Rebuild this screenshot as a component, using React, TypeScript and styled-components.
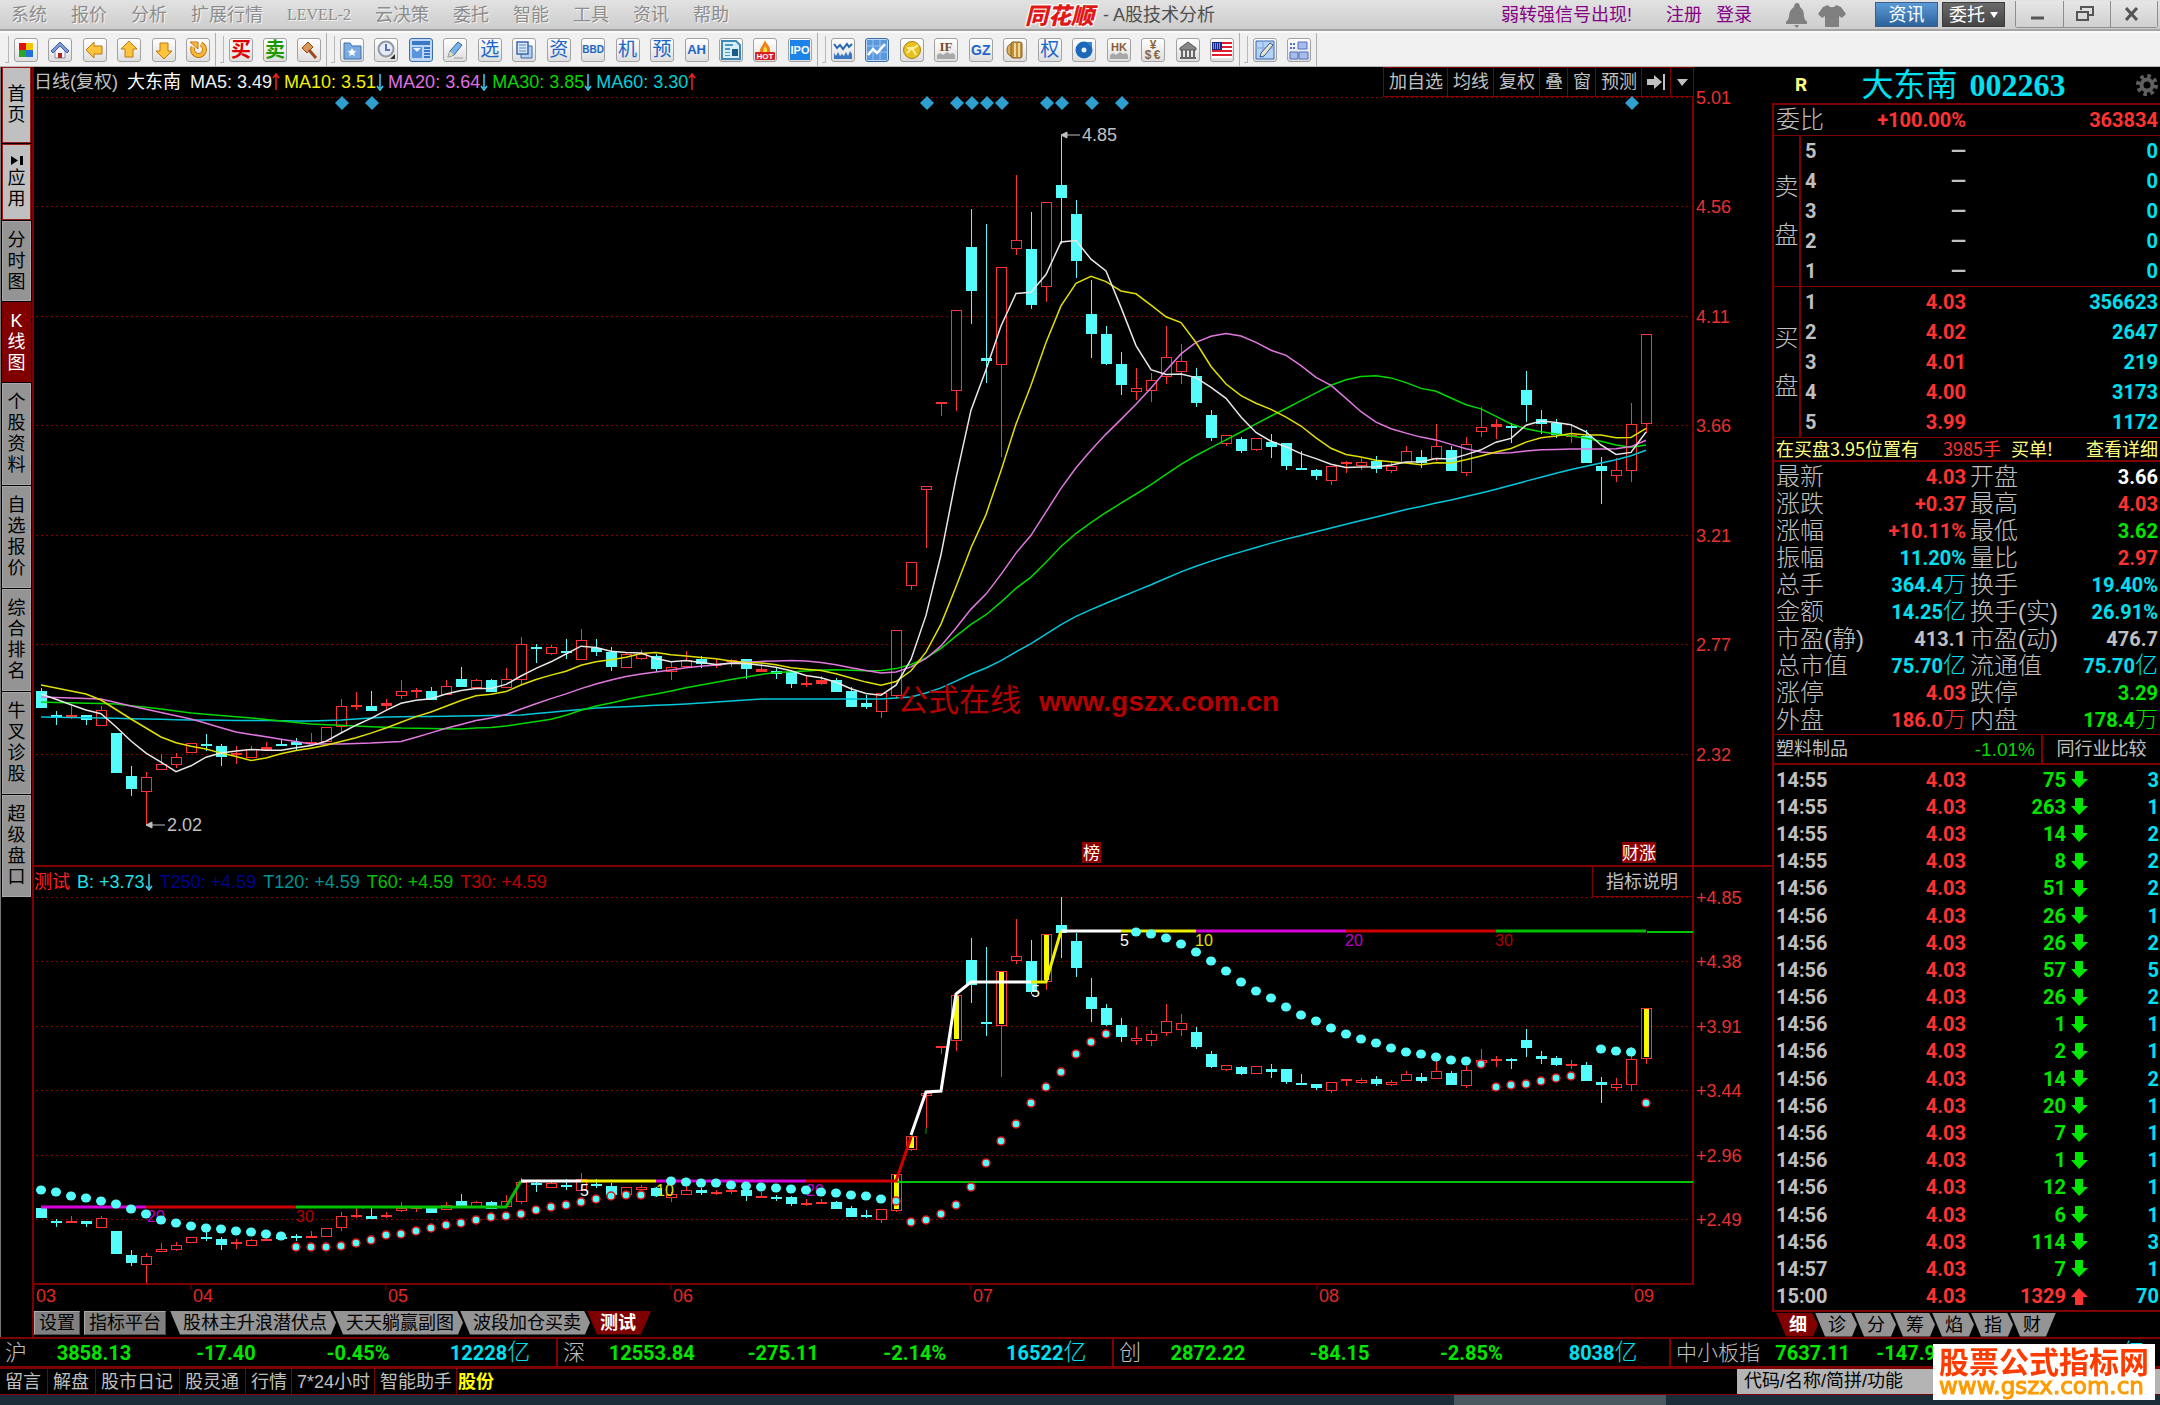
import React from 'react';
import styled, { createGlobalStyle, css } from 'styled-components';

const RED = '#ff3232';
const GREEN = '#00e600';
const CYAN = '#00e0f0';
const LINE = '#800000';
const GREY = '#c0c0c0';
const sans = '"Liberation Sans", "Noto Sans CJK SC", sans-serif';
const numeric = 'Roboto, "Noto Sans CJK SC", sans-serif';

const GlobalStyle = createGlobalStyle`
  *, *::before, *::after { box-sizing: border-box; }
  body { margin: 0; background: #000; color: ${GREY}; font: 18px/1 ${sans}; }
  button, input { font: inherit; color: inherit; margin: 0; padding: 0; border: 0; background: none; }
  button { cursor: pointer; }
  a { color: inherit; text-decoration: none; }
  table { border-collapse: collapse; border-spacing: 0; width: 100%; }
  th, td { padding: 0; font-weight: inherit; text-align: left; }
  h1, dl, dd { margin: 0; font-weight: inherit; }
`;

const Page = styled.div`
  display: flex;
  flex-direction: column;
  min-height: 100vh;
  overflow: hidden;
  white-space: nowrap;
`;

/* ---------- title bar ---------- */

const TitleBar = styled.header`
  display: grid;
  grid-template-columns: 1fr auto 1fr;
  align-items: center;
  height: 31px;
  background: linear-gradient(#e2e2e2, #cdcdcd);
  border-bottom: 2px solid #a4a4a4;
`;
const Menu = styled.nav`
  display: flex;
  gap: 24px;
  padding-left: 11px;
  color: #8c8c8c;
  text-shadow: 1px 1px 0 #f4f4f4;
`;
const SerifLink = styled.a`
  font: 16px/18px "Liberation Serif", serif;
`;
const Caption = styled.h1`
  display: flex;
  align-items: center;
  gap: 9px;
  padding-left: 80px;
  font-size: 18px;
  color: #505050;
`;
const Logo = styled.span`
  font: italic 900 23px/29px "Noto Sans CJK SC", sans-serif;
  color: #e01818;
  text-shadow: 1px 1px 0 #fff, -1px -1px 0 #fff, 1px -1px 0 #fff, -1px 1px 0 #fff;
`;
const TitleRight = styled.div`
  display: flex;
  align-items: center;
  justify-content: flex-end;
  height: 29px;
  gap: 14px;
  padding-right: 2px;
  color: #850085;
`;
const Notice = styled.a`
  padding-right: 20px;
`;
const TitleIcons = styled.svg`
  margin-left: 19px;
`;
const ModeButtons = styled.div`
  display: flex;
  gap: 4px;
  margin-left: 14px;
`;
const ModeButton = styled.button<{ $dark?: boolean }>`
  display: flex;
  align-items: center;
  justify-content: center;
  gap: 5px;
  width: 63px;
  height: 25px;
  color: #fff;
  border: 1px solid ${p => (p.$dark ? '#3c3c3c' : '#3a5f88')};
  background: ${p => (p.$dark ? 'linear-gradient(#6a6a6a, #444)' : 'linear-gradient(#5a9ad8, #2d6299)')};
`;
const WindowButtons = styled.div`
  display: flex;
  height: 27px;
  margin-left: -4px;
  border: 1px solid #8e8e8e;
  border-top: 0;
  border-radius: 0 0 3px 3px;
`;
const WindowButton = styled.button`
  display: grid;
  place-items: center;
  width: 47px;
  padding-right: 4px;
  color: #555;
  background: linear-gradient(#e6e6e6, #d0d0d0);
  & + & { border-left: 1px solid #8e8e8e; }
`;

/* ---------- tool bar ---------- */

const ToolBar = styled.div`
  display: flex;
  height: 36px;
  padding-left: 1px;
  background: #f0f0f0;
  border-top: 2px solid #fafafa;
  border-bottom: 1px solid #b8b8b8;
`;
const ToolGroup = styled.div<{ $count: number }>`
  display: flex;
  align-items: center;
  justify-content: space-between;
  width: ${p => Math.floor(p.$count * 34 + p.$count / 2 + 8)}px;
  padding: 0 5px 0 13px;
  border-right: 1px solid #b0b0b0;
  position: relative;
  &::before {
    content: '';
    position: absolute;
    left: 4px;
    top: 3px;
    bottom: 3px;
    width: 4px;
    border: 1px solid #b8b8b8;
    border-left: 0;
    border-top: 0;
  }
`;
const ToolButton = styled.button<{ $active?: boolean; $color?: string; $size?: number }>`
  display: grid;
  place-items: center;
  flex: none;
  width: 24px;
  height: 24px;
  border: 1px solid ${p => (p.$active ? '#3f6ea8' : '#a2a2a2')};
  border-radius: 3px;
  background: ${p => (p.$active ? '#bcd6f4' : 'linear-gradient(#fff, #dedede)')};
  color: ${p => p.$color || '#1c66c8'};
  font: ${p => ((p.$size || 19) < 15 ? 700 : 400)} ${p => p.$size || 19}px/20px ${sans};
  ${p => p.$size === 20 && css`font-weight: 700;`}
  svg { display: block; }
`;

type Tool = { name: string; text?: string; size?: number; color?: string; active?: boolean; art?: React.ReactNode };

const arrowPath = 'M1 10 L9 2 L9 6 L17 6 L17 14 L9 14 L9 18 Z';
const Art = ({ children }: { children: React.ReactNode }) => (
  <svg width="20" height="20" viewBox="0 0 20 20" aria-hidden="true">{children}</svg>
);
const GoldArrow = ({ turn }: { turn: number }) => (
  <Art><path d={arrowPath} transform={`rotate(${turn} 10 10)`} fill="#fcc33c" stroke="#c07a10" strokeLinejoin="round" /></Art>
);

const toolGroups: Tool[][] = [
  [
    { name: '版面', art: <Art><path fill="#e01010" d="M3 3h7v7H3z" /><path fill="#f4c400" d="M10 3h7v7h-7z" /><path fill="#28a428" d="M3 10h7v7H3z" /><path fill="#2070d8" d="M10 10h7v7h-7z" /></Art> },
    { name: '首页', art: <Art><path d="M5 9v9h10V9" fill="#f4f4fa" stroke="#8a90b0" /><path d="M1 11 10 2l9 9-2 2-7-7-7 7z" fill="#7f9ad8" stroke="#4460a0" /><path d="M8 13h4v5H8z" fill="#b02818" /></Art> },
    { name: '后退', art: <GoldArrow turn={0} /> },
    { name: '向上', art: <GoldArrow turn={90} /> },
    { name: '向下', art: <GoldArrow turn={270} /> },
    { name: '刷新', art: <Art><path d="M13 4a6 6 0 1 1-8 3" fill="none" stroke="#c07a10" strokeWidth="5" /><path d="M13 4a6 6 0 1 1-8 3" fill="none" stroke="#fcb83c" strokeWidth="3" /><path d="M2 2h8v7z" fill="#fcb83c" stroke="#c07a10" /></Art> },
  ],
  [
    { name: '买入', text: '买', color: '#e00000', size: 20 },
    { name: '卖出', text: '卖', color: '#1a9a00', size: 20 },
    { name: '委托', art: <Art><path d="M3 8 9 2l5 5-6 6z" fill="#d89858" stroke="#8a4a18" /><path d="m10 10 7 8" stroke="#9a4a18" strokeWidth="3" /></Art> },
  ],
  [
    { name: '自选股', art: <Art><path d="M2 3h6l2 3h9v13H2z" fill="#7cacdf" stroke="#3a70b0" /><path d="m10 8 1.300 2.700 3 .3-2.200 2 .7 3-2.800-1.500L7.200 16l.7-3-2.200-2 3-.3z" fill="#fff" /></Art> },
    { name: '时钟', art: <Art><circle cx="10" cy="9" r="7.500" fill="#e4ebf4" stroke="#9098a4" strokeWidth="2" /><path d="M10 4v6h4" fill="none" stroke="#5870c0" strokeWidth="2" /><path d="M19 14v5h-5z" fill="#333" /></Art> },
    { name: '综合', active: true, art: <Art><path fill="#3a78c8" d="M1 1h18v4H1z" /><path fill="#5a94dc" d="M1 7h10v11H1z" /><path fill="#3a78c8" d="M13 7h6v2h-6zM13 10h6v2h-6zM13 13h6v2h-6zM13 16h6v2h-6z" /><path fill="#e4f0fc" d="m2 8 4 4 4-4z" /></Art> },
    { name: '画线', art: <Art><path d="M3 17 5 11 13 2l4 3-8 10z" fill="#78b4ec" stroke="#3468a0" /><path d="m3 17 2-6 4 4z" fill="#e8d8b0" /><path d="M9 18h9" stroke="#999" /></Art> },
    { name: '选股', text: '选' },
    { name: '报表', art: <Art><path d="M7 6h11v12H7z" fill="#b8d0ee" stroke="#3a68a8" /><path d="M3 2h11v12H3z" fill="#d8e8fa" stroke="#3a68a8" strokeWidth="1.500" /><path d="M5 5h7M5 8h7M5 11h7" stroke="#5a88c0" /></Art> },
    { name: '资金', text: '资' },
    { name: '大单', text: 'BBD', size: 10 },
    { name: '机构', text: '机' },
    { name: '预测', text: '预' },
    { name: 'AH股', text: 'AH', size: 13 },
    { name: '资料', art: <Art><path d="M1 1h14l4 4v14H1z" fill="#d8eefa" stroke="#3e8ab4" strokeWidth="2" /><path d="M4 4h8v2H4zM4 8h5v2H4zM4 12h5v1H4zM4 15h5v1H4z" fill="#4898c8" /><path d="M11 9h6v7h-6z" fill="#185c88" /></Art> },
    { name: '热点', art: <Art><path d="M10 0c1 4 6 6 5 12H5C4 8 8 6 10 0z" fill="#f08018" /><path d="M10 6c1 2 3 3 2 6H8c0-3 1-3 2-6z" fill="#fce040" /><rect y="12" width="20" height="8" rx="1" fill="#d82020" /><text x="10" y="19" fontSize="8" fontWeight="700" fill="#fff" textAnchor="middle">HOT</text></Art> },
    { name: '新股', art: <Art><rect width="20" height="20" fill="#1c84e8" /><text x="10" y="14" fontSize="11" fontWeight="700" fill="#fff" textAnchor="middle">IPO</text></Art> },
  ],
  [
    { name: '走势', art: <Art><path d="m1 4 3 4 3-3 3 4 4-5 2 3 3-3" fill="none" stroke="#2868b0" strokeWidth="2" /><path d="M1 19v-6l2 3 2-4 2 4 2-2 2 2 2-4 2 4 2-5 2 3v5z" fill="#3878c0" /></Art> },
    { name: 'K线', active: true, art: <Art><path fill="#5c98dc" d="M0 0h20v20H0z" /><path d="M0 6h20M0 12h20M6 0v20M13 0v20" stroke="#9ac4f0" /><path d="m1 15 5-6 4 4 8-9" fill="none" stroke="#fff" strokeWidth="2.500" /></Art> },
    { name: '黄金', art: <Art><circle cx="10" cy="10" r="8.500" fill="#e8c020" stroke="#a88410" /><path d="M5 8h7l4-3M5 13l5-5 4 7" fill="none" stroke="#fff0a0" strokeWidth="2" /></Art> },
    { name: '期指', art: <Art><text x="10" y="11" fontSize="13" fontWeight="700" fill="#7a4a28" textAnchor="middle" fontFamily="Liberation Serif">IF</text><path d="M1 19v-4l3-2 3 2 4-3 3 2 3-1 2 2v4z" fill="#a8a8a8" /></Art> },
    { name: '国债', text: 'GZ', size: 14 },
    { name: '原油', art: <Art><ellipse cx="6" cy="10" rx="4" ry="6" fill="#d8b060" stroke="#8a6420" /><rect x="6" y="2" width="11" height="16" rx="2" fill="#c09040" stroke="#8a6420" /><path d="M10 3v14M14 3v14" stroke="#f0d898" strokeWidth="2" /></Art> },
    { name: '权证', text: '权' },
    { name: '基金', art: <Art><circle cx="10" cy="10" r="5.500" fill="none" stroke="#1c68b8" strokeWidth="6" /><path d="M12 2h6v5z" fill="#3a88d8" /></Art> },
    { name: '港股', art: <Art><text x="10" y="11" fontSize="11" fontWeight="700" fill="#8a5a38" textAnchor="middle">HK</text><path d="M1 19v-4l3-2 3 2 4-3 3 2 3-1 2 2v4z" fill="#a8a8a8" /></Art> },
    { name: '外汇', art: <Art><g fill="#8a6440" fontSize="12" fontWeight="700" textAnchor="middle"><text x="10" y="9">¥</text><text x="5" y="19">$</text><text x="14" y="19">€</text></g></Art> },
    { name: '银行', art: <Art><path d="m10 2 8 6v2H2V8z" fill="#888" stroke="#555" /><path d="M4 10v7M8 10v7M12 10v7M16 10v7M2 18h16" stroke="#666" strokeWidth="2" /></Art> },
    { name: '美股', art: <Art><path fill="#fff" d="M0 2h20v16H0z" /><path d="M0 3h20M0 7h20M0 11h20M0 15h20" stroke="#e02030" strokeWidth="2" /><path fill="#182888" d="M0 2h10v8H0z" /><path d="M1 4h8M1 6h8M1 8h8" stroke="#fff" strokeDasharray="1 1" /></Art> },
  ],
  [
    { name: '指标编辑', art: <Art><path fill="#b4d2f4" stroke="#3868b0" d="M1 1h18v18H1z" /><path d="M1 8h18M8 1v18" stroke="#7ca4dc" /><path d="M5 17 6 13 15 3l3 2-9 11z" fill="#f0e4c8" stroke="#2858a0" /></Art> },
    { name: '版面管理', art: <Art><path d="M1 4h6M1 8h6" stroke="#5070c0" strokeWidth="2" strokeDasharray="2 1" /><path d="M9 2h9v7H9zM1 12h8v7H1zM10 12h9v7h-9z" fill="#a8bcec" stroke="#5070c0" /></Art> },
  ],
];

/* ---------- body ---------- */

const Body = styled.main`
  display: flex;
  flex: 1;
`;
const SideNav = styled.nav`
  display: flex;
  flex-direction: column;
  flex: none;
  gap: 1px;
  width: 34px;
  padding-left: 1px;
  border-left: 1px solid #777;
  border-right: 2px solid ${LINE};
`;
const sideHeights: Record<number, number> = { 2: 76, 3: 80, 4: 102 };
const SideButton = styled.button<{ $tone?: 'light' | 'active'; $chars: number }>`
  display: flex;
  flex-direction: column;
  align-items: center;
  justify-content: center;
  width: 29px;
  height: ${p => sideHeights[p.$chars]}px;
  font-size: 18px;
  line-height: 21px;
  white-space: normal;
  word-break: break-all;
  color: ${p => (p.$tone === 'active' ? '#fff' : '#000')};
  background: ${p => (p.$tone === 'active' ? '#800000' : p.$tone === 'light' ? '#c0c0c0' : '#949494')};
  border: 1px solid ${p => (p.$tone === 'light' ? '#9c1c1c' : p.$tone === 'active' ? '#800000' : '#a8a8a8')};
  span { width: 18px; }
`;

const ChartColumn = styled.section`
  display: flex;
  flex-direction: column;
  flex: 1;
  min-width: 0;
`;
const Legend = styled.div<{ $framed?: boolean }>`
  display: flex;
  align-items: center;
  gap: ${p => (p.$framed ? 7 : 4)}px;
  height: 30px;
  margin-right: 78px;
  border-right: ${p => (p.$framed ? `2px solid ${LINE}` : '0')};
`;
const LegendItem = styled.span<{ $color: string }>`
  display: inline-flex;
  align-items: center;
  line-height: 28px;
  color: ${p => p.$color};
`;
const LegendName = styled(LegendItem)`
  margin-right: 5px;
`;
const ChartActions = styled.div`
  display: flex;
  height: 30px;
  margin-left: auto;
  align-self: flex-start;
`;
const ChartAction = styled.button`
  display: flex;
  align-items: center;
  padding: 0 4px 0 5px;
  border: 1px solid ${LINE};
  margin-left: -1px;
  min-width: 24px;
  justify-content: center;
`;
const ExplainButton = styled(ChartAction)`
  padding: 0 14px 0 13px;
  border-top: 0;
  border-right: 0;
`;
const Plot = styled.svg`
  display: block;
  width: 100%;
  overflow: visible;
  font: 18px ${sans};
`;
const PlotFrame = styled.div`
  border-bottom: 2px solid ${LINE};
`;

const Arrow = ({ up }: { up?: boolean }) => (
  <svg width="8" height="18" viewBox="0 0 8 18" aria-hidden="true">
    {up
      ? <path d="M4 17V2M1 5l3-4 3 4" fill="none" stroke="#f02020" strokeWidth="1.500" />
      : <path d="M4 1v14M1 13l3 4 3-4" fill="none" stroke="#40d0f8" strokeWidth="1.500" />}
  </svg>
);

/* u: rising (hollow), d: falling, f: rising (solid); then body top, body bottom, high, low */
type Candle = [string, number, number, number, number];
const candles: Candle[] = [
  ['d', 691, 707, 688, 707], ['d', 715, 717, 711, 725], ['f', 716, 716, 706, 719], ['d', 715, 719, 715, 725],
  ['u', 710, 725, 706, 725], ['d', 733, 772, 733, 772], ['d', 776, 788, 766, 796], ['u', 777, 791, 772, 825],
  ['u', 764, 769, 754, 769], ['u', 757, 764, 753, 768], ['u', 743, 752, 743, 752], ['d', 745, 745, 734, 751],
  ['d', 746, 756, 744, 766], ['f', 754, 754, 746, 764], ['u', 749, 757, 746, 758], ['f', 747, 749, 742, 751],
  ['d', 745, 745, 739, 746], ['d', 742, 744, 738, 751], ['f', 743, 743, 733, 744], ['u', 727, 741, 727, 741],
  ['u', 706, 726, 699, 733], ['f', 706, 706, 692, 710], ['d', 706, 710, 691, 710], ['f', 703, 705, 699, 710],
  ['u', 691, 695, 680, 699], ['f', 691, 691, 688, 698], ['d', 691, 699, 687, 699], ['u', 686, 694, 680, 695],
  ['d', 679, 686, 667, 687], ['u', 680, 687, 679, 687], ['d', 680, 691, 679, 692], ['u', 679, 687, 668, 687],
  ['u', 644, 679, 637, 684], ['d', 648, 648, 644, 663], ['u', 647, 653, 645, 655], ['d', 652, 652, 639, 659],
  ['u', 640, 659, 629, 660], ['d', 648, 651, 639, 656], ['d', 652, 666, 647, 671], ['u', 654, 667, 653, 667],
  ['u', 654, 658, 650, 660], ['d', 656, 668, 654, 672], ['u', 667, 671, 662, 680], ['u', 660, 666, 651, 668],
  ['d', 659, 663, 656, 668], ['f', 665, 665, 659, 668], ['f', 661, 661, 659, 667], ['d', 659, 668, 659, 679],
  ['f', 669, 671, 663, 672], ['d', 671, 673, 668, 679], ['d', 672, 683, 670, 688], ['f', 684, 684, 675, 687],
  ['f', 680, 683, 676, 685], ['d', 680, 691, 678, 692], ['d', 691, 706, 687, 706], ['d', 703, 706, 695, 709],
  ['u', 693, 711, 693, 718], ['u', 630, 695, 630, 699], ['u', 562, 585, 562, 590], ['u', 486, 489, 486, 548],
  ['f', 403, 403, 403, 416], ['u', 310, 390, 310, 411], ['d', 247, 290, 209, 324], ['d', 358, 360, 224, 383],
  ['u', 267, 364, 267, 457], ['u', 240, 248, 175, 255], ['d', 249, 304, 212, 309], ['u', 202, 286, 202, 302],
  ['d', 185, 197, 135, 244], ['d', 214, 260, 200, 278], ['d', 314, 333, 280, 358], ['d', 334, 363, 326, 365],
  ['d', 364, 384, 352, 395], ['u', 388, 391, 368, 400], ['u', 380, 390, 373, 402], ['u', 357, 376, 326, 384],
  ['u', 361, 371, 344, 384], ['d', 376, 402, 368, 407], ['d', 415, 437, 410, 441], ['u', 435, 443, 435, 446],
  ['d', 439, 450, 437, 453], ['u', 438, 449, 438, 451], ['d', 442, 446, 434, 458], ['d', 443, 465, 443, 470],
  ['d', 469, 469, 451, 470], ['d', 470, 475, 469, 480], ['u', 466, 480, 466, 485], ['f', 463, 463, 461, 473],
  ['u', 462, 465, 458, 470], ['d', 461, 468, 456, 473], ['u', 466, 470, 462, 473], ['u', 451, 462, 446, 462],
  ['d', 457, 462, 450, 468], ['u', 446, 458, 424, 461], ['d', 450, 470, 446, 470], ['u', 444, 472, 437, 476],
  ['u', 427, 431, 407, 437], ['f', 424, 426, 419, 439], ['d', 427, 427, 423, 443], ['d', 390, 404, 371, 422],
  ['d', 419, 423, 410, 434], ['d', 423, 434, 419, 438], ['f', 436, 436, 426, 443], ['d', 436, 462, 430, 462],
  ['d', 466, 470, 457, 504], ['u', 470, 475, 458, 482], ['u', 424, 470, 403, 482], ['u', 334, 423, 334, 433],
];

const xAt = (i: number) => 41 + i * 15;
const mainY = (y: number) => y;
const subY = (y: number) => Math.round(897 + (y - 135) * 0.559);

const closes = candles.map(([kind, top, bottom]) => (kind === 'd' ? bottom : top));

/* Averages need sessions from before the visible range, so each starts from known points. */
const averagePoints = (span: number, lead: [number, number][]) => {
  const points: string[] = [];
  for (let i = 0; i < candles.length; i++) {
    let y: number;
    if (i >= span - 1) {
      y = closes.slice(i - span + 1, i + 1).reduce((a, b) => a + b, 0) / span;
    } else {
      const next = Math.max(1, lead.findIndex(([at]) => at >= i));
      const [x0, y0] = lead[next - 1];
      const [x1, y1] = lead[next];
      y = y0 + ((y1 - y0) * (i - x0)) / (x1 - x0);
    }
    points.push(`${xAt(i)},${y.toFixed(1)}`);
  }
  return points.join(' ');
};

const averages = [
  { color: '#00c8dc', points: averagePoints(60, [[0, 717], [4, 718], [10, 720], [18, 721], [20, 720], [23, 717], [28, 716], [32, 715], [37, 708], [43, 704], [48, 699], [56, 699], [58, 697]]) },
  { color: '#00d800', points: averagePoints(30, [[0, 702], [5, 704], [8, 709], [10, 713], [14, 718], [18, 724], [24, 728], [28, 729]]) },
  { color: '#e078e0', points: averagePoints(20, [[0, 697], [4, 699], [6, 706], [10, 719], [13, 732], [18, 744]]) },
  { color: '#e0e000', points: averagePoints(10, [[0, 685], [3, 694], [4, 700], [6, 719], [8, 737]]) },
  { color: '#e8e8e8', points: averagePoints(5, [[0, 694], [3, 710]]) },
];

const Candles = ({ scale }: { scale: (y: number) => number }) => (
  <g shapeRendering="crispEdges">
    {candles.map(([kind, top, bottom, high, low], i) => {
      const x = xAt(i);
      const color = kind === 'd' ? '#54fcfc' : RED;
      const t = scale(top);
      const b = scale(bottom);
      return (
        <g key={i} stroke={color} strokeWidth="1">
          <path d={`M${x} ${scale(high)}V${t}M${x} ${b}V${scale(low)}`} fill="none" />
          {kind === 'u'
            ? <rect x={x - 5} y={t} width="10" height={Math.max(2, b - t)} fill="#000" />
            : <rect x={x - 5} y={t} width="10" height={Math.max(0, b - t)} fill={color} />}
          {t === b && <path d={`M${x - 5} ${t}h11`} strokeWidth="2" />}
        </g>
      );
    })}
  </g>
);

const Grid = ({ rows, labels }: { rows: number[]; labels: string[] }) => (
  <g>
    {rows.map((y, i) => (
      <g key={y}>
        <path d={`M36 ${y}H1693`} stroke="#8c0000" strokeDasharray="2 3" shapeRendering="crispEdges" />
        <text x="1696" y={y + 7} fill="#e83030">{labels[i]}</text>
      </g>
    ))}
  </g>
);

const eventDays = [20, 22, 59, 61, 62, 63, 64, 67, 68, 70, 72, 106];

const MainPlot = () => (
  <Plot viewBox="34 97 1738 768" role="img" aria-label="日线">
    <Grid rows={[97, 206, 316, 425, 535, 644, 754]} labels={['5.01', '4.56', '4.11', '3.66', '3.21', '2.77', '2.32']} />
    <path d="M1693 97V866" stroke={LINE} strokeWidth="2" />
    <Candles scale={mainY} />
    {averages.map(a => <polyline key={a.color} points={a.points} fill="none" stroke={a.color} strokeWidth="1.500" />)}
    {eventDays.map(i => <path key={i} d={`M${xAt(i) - 6} 103l7-7 7 7-7 7z`} fill="#2f9fcf" />)}
    <g fill={GREY} stroke={GREY}>
      <path d="M1061 135h19M1061 135l6-3v6z" />
      <path d="M146 825h19M146 825l6-3v6z" />
    </g>
    <g fill={GREY}>
      <text x="1082" y="141">4.85</text>
      <text x="167" y="831">2.02</text>
    </g>
    <g fill="#b40000">
      <text x="897" y="711" fontSize="31">公式在线</text>
      <text x="1039" y="711" fontSize="28" fontWeight="700">www.gszx.com.cn</text>
    </g>
    <g fill="#8c0000">
      <rect x="1082" y="842" width="19" height="21" />
      <rect x="1622" y="842" width="34" height="21" />
    </g>
    <g fill="#fff" fontSize="17">
      <text x="1083" y="859">榜</text>
      <text x="1622" y="859">财涨</text>
    </g>
  </Plot>
);

type Dot = [number, number];
const run = (start: number, ys: number[]): Dot[] => ys.map((y, k) => [start + k, y]);
const fallingDots = [
  ...run(0, [1190, 1192, 1196, 1198, 1201, 1204, 1209, 1214, 1220, 1223, 1226, 1228, 1229, 1231, 1232, 1234, 1236]),
  ...run(41, [1192, 1181, 1182, 1183, 1183, 1185, 1186, 1187, 1188, 1189, 1190, 1192, 1193, 1195, 1196, 1199]),
  ...run(72, [1031, 932, 934, 938, 944, 952, 961, 971, 982, 991, 998, 1007, 1015, 1021, 1028, 1034, 1039, 1043, 1048, 1052, 1054, 1057, 1060, 1061]),
  ...run(103, [1075, 1049, 1051, 1052]),
];
const risingDots = [
  ...run(17, [1247, 1247, 1247, 1246, 1243, 1240, 1235, 1234, 1231, 1228, 1225, 1223, 1220, 1217, 1216, 1214, 1210, 1207, 1205, 1202, 1199, 1196, 1195, 1195]),
  ...run(57, [1201, 1222, 1220, 1214, 1205, 1187, 1163, 1141, 1124, 1103, 1087, 1072, 1054, 1042, 1034]),
  ...run(96, [1064, 1087, 1085, 1084, 1081, 1078, 1076]),
  [107, 1103] as Dot,
];
const segments: [string, Dot[]][] = [
  ['#d800d8', [[0, 1207], [7, 1207]]],
  ['#d00000', [[7, 1207], [17, 1207]]],
  ['#00c000', [[17, 1207], [31, 1207], [32, 1181]]],
  ['#ffffff', [[32, 1181], [36, 1181]]],
  ['#f0f000', [[36, 1181], [41, 1181]]],
  ['#d800d8', [[41, 1181], [51, 1181]]],
  ['#d00000', [[51, 1181], [57, 1181], [58, 1137]]],
  ['#ffffff', [[58, 1135], [59, 1092], [60, 1091], [61, 994], [62, 982], [66, 982]]],
  ['#f0f000', [[66, 982], [67, 982], [68, 931]]],
  ['#ffffff', [[68, 931], [72, 931]]],
  ['#f0f000', [[72, 931], [77, 931]]],
  ['#d800d8', [[77, 931], [87, 931]]],
  ['#d00000', [[87, 931], [97, 931]]],
  ['#00c000', [[97, 931], [107, 931]]],
];
const marks: [number, number, string, string][] = [
  [147, 1222, '20', '#c000c0'], [296, 1222, '30', '#b00000'], [580, 1196, '5', '#fff'], [656, 1196, '10', '#e0e000'],
  [806, 1196, '20', '#c000c0'], [1031, 997, '5', '#fff'], [1120, 946, '5', '#fff'], [1195, 946, '10', '#e0e000'],
  [1345, 946, '20', '#c000c0'], [1495, 946, '30', '#b00000'],
];
const months: [number, string][] = [[34, '03'], [191, '04'], [386, '05'], [671, '06'], [971, '07'], [1317, '08'], [1632, '09']];

const SubPlot = () => (
  <Plot viewBox="34 897 1738 413" role="img" aria-label="测试指标">
    <Grid rows={[897, 961, 1026, 1090, 1155, 1219]} labels={['+4.85', '+4.38', '+3.91', '+3.44', '+2.96', '+2.49']} />
    <path d="M1693 897V1284M33 1284H1694" stroke={LINE} strokeWidth="2" />
    <Candles scale={subY} />
    <g fill="#f8f800">
      {[57, 58, 61, 64, 67, 107].map(i => {
        const [, top, bottom] = candles[i];
        return <rect key={i} x={xAt(i) - 2} y={subY(top) + 1} width="5" height={subY(bottom) - subY(top) - 2} />;
      })}
    </g>
    <path d="M897 1182H1693M1647 932H1693" stroke="#00c800" strokeWidth="2" />
    <path d="M926 1128v6" stroke="#00a000" />
    {segments.map(([color, pts], k) => (
      <polyline key={k} points={pts.map(([i, y]) => `${xAt(i)},${y}`).join(' ')} fill="none" stroke={color} strokeWidth="3" />
    ))}
    <g fontSize="16">
      {marks.map(([x, y, t, c]) => <text key={x} x={x} y={y} fill={c}>{t}</text>)}
    </g>
    <g fill="#54fcfc">
      {fallingDots.map(([i, y]) => <ellipse key={i} cx={xAt(i)} cy={y} rx="5" ry="4.500" />)}
    </g>
    <g fill="#54fcfc" stroke="#e01818" strokeWidth="1.500">
      {risingDots.map(([i, y]) => <circle key={i} cx={xAt(i)} cy={y} r="4" />)}
    </g>
    {months.map(([x, t]) => (
      <g key={t}>
        <path d={`M${x} 1284v6`} stroke={LINE} />
        <text x={x + 2} y="1302" fill="#e02828">{t}</text>
      </g>
    ))}
  </Plot>
);

/* ---------- slanted tabs ---------- */

const TabRow = styled.div<{ $inset?: number }>`
  display: flex;
  align-items: center;
  height: 25px;
  padding-left: ${p => p.$inset || 0}px;
`;
const PlainTab = styled.button`
  height: 24px;
  margin-right: 4px;
  padding: 0 4px;
  color: #000;
  background: #808080;
  border: 1px solid #a8a8a8;
  border-right-color: #505050;
  border-bottom-color: #505050;
`;
const SlantTab = styled.button<{ $active?: boolean; $narrow?: boolean }>`
  height: 24px;
  margin-right: -3px;
  padding: ${p => (p.$narrow ? '0 11px 0 13px' : '0 9px 0 13px')};
  color: ${p => (p.$active ? '#fff' : '#000')};
  font-weight: ${p => (p.$active ? 700 : 400)};
  background: ${p => (p.$active ? '#800000' : '#949494')};
  clip-path: polygon(0 0, calc(100% - 6px) 0, 100% 50%, calc(100% - 5px) 100%, 10px 100%);
  &:last-child {
    padding-right: 15px;
    clip-path: polygon(0 0, 100% 0, calc(100% - 10px) 100%, 10px 100%);
  }
`;

/* ---------- quote panel ---------- */

const Panel = styled.aside`
  flex: none;
  width: 388px;
`;
const StockTitle = styled.div`
  display: flex;
  align-items: center;
  height: 36px;
  padding: 0 2px 0 23px;
  color: ${CYAN};
`;
const Flag = styled.b`
  color: #ffff80;
  font: 700 19px/24px ${numeric};
`;
const StockName = styled.h1`
  margin: 0 auto;
  padding-right: 16px;
  font: 400 32px/34px "Liberation Serif", "Noto Sans CJK SC", serif;
  b { margin-left: 12px; }
`;
const PanelFrame = styled.div`
  border: 2px solid ${LINE};
  border-right: 0;
`;
const Value = styled.b<{ $color: string }>`
  color: ${p => p.$color};
  font: 700 20px/26px ${numeric};
  i { font-style: normal; font-weight: 300; font-size: 23px; }
`;
const Ratio = styled.div`
  display: grid;
  grid-template-columns: 52px 138px 1fr;
  align-items: center;
  height: 31px;
  padding: 0 2px;
  font-size: 24px;
  font-weight: 300;
  border-bottom: 1px solid ${LINE};
  ${Value} { text-align: right; }
`;
const BookTable = styled.table`
  border-bottom: 1px solid ${LINE};
  font: 700 20px/30px ${numeric};
  td { height: 30px; }
  td:nth-last-child(3) { width: 40px; padding-left: 4px; }
  td:nth-last-child(2) { width: 126px; text-align: right; }
  td:last-child { text-align: right; padding-right: 2px; color: ${CYAN}; }
`;
const BookSide = styled.th`
  width: 26px;
  border-right: 2px solid ${LINE};
  font: 300 24px/48px ${sans};
  white-space: normal;
  word-break: break-all;
  text-align: center;
`;
const Hint = styled.div`
  display: flex;
  align-items: flex-start;
  height: 24px;
  gap: 10px;
  padding: 0 2px;
  color: #ffff80;
  font: 18px/20px "Noto Sans CJK SC", sans-serif;
  border-bottom: 2px solid ${LINE};
  em { font-style: normal; color: ${RED}; margin-left: 14px; }
  a { margin-left: auto; }
`;
const Stats = styled.dl`
  display: grid;
  grid-template-columns: 190px 1fr;
  column-gap: 4px;
  padding: 1px 2px;
  border-bottom: 1px solid ${LINE};
`;
const Stat = styled.div`
  display: flex;
  align-items: center;
  justify-content: space-between;
  height: 27px;
  font-size: 24px;
  font-weight: 300;
`;
const Sector = styled.div`
  display: flex;
  align-items: center;
  height: 30px;
  padding-left: 2px;
  border-bottom: 2px solid ${LINE};
  span { margin-left: auto; padding-right: 6px; color: #00d800; font-size: 19px; }
  button { width: 119px; height: 28px; border-left: 2px solid ${LINE}; }
`;
const TradeTable = styled.table`
  height: 544px;
  margin-top: 1px;
  font: 700 20px/26px ${numeric};
  td:nth-child(1) { width: 84px; padding-left: 2px; }
  td:nth-child(2) { width: 108px; color: ${RED}; text-align: right; }
  td:nth-child(3) { width: 100px; text-align: right; }
  td:nth-child(4) { width: 24px; padding-left: 5px; }
  td:last-child { text-align: right; color: ${CYAN}; padding-right: 1px; }
  svg { display: block; }
`;
const Volume = styled.td<{ $up?: boolean }>`
  color: ${p => (p.$up ? RED : GREEN)};
`;
const Price = styled.td<{ $color: string }>`
  color: ${p => p.$color};
`;

const stats: [string, string, string][] = [
  ['最新', '4.03', RED], ['开盘', '3.66', '#fff'], ['涨跌', '+0.37', RED], ['最高', '4.03', RED],
  ['涨幅', '+10.11%', RED], ['最低', '3.62', GREEN], ['振幅', '11.20%', CYAN], ['量比', '2.97', RED],
  ['总手', '364.4万', CYAN], ['换手', '19.40%', CYAN], ['金额', '14.25亿', CYAN], ['换手(实)', '26.91%', CYAN],
  ['市盈(静)', '413.1', GREY], ['市盈(动)', '476.7', GREY], ['总市值', '75.70亿', CYAN], ['流通值', '75.70亿', CYAN],
  ['涨停', '4.03', RED], ['跌停', '3.29', GREEN], ['外盘', '186.0万', RED], ['内盘', '178.4万', GREEN],
];
const asks = [5, 4, 3, 2, 1].map(n => [String(n), '—', '0']);
const bids = [['1', '4.03', '356623'], ['2', '4.02', '2647'], ['3', '4.01', '219'], ['4', '4.00', '3173'], ['5', '3.99', '1172']];
const trades: [string, number, number][] = [
  ['14:55', 75, 3], ['14:55', 263, 1], ['14:55', 14, 2], ['14:55', 8, 2], ['14:56', 51, 2], ['14:56', 26, 1], ['14:56', 26, 2],
  ['14:56', 57, 5], ['14:56', 26, 2], ['14:56', 1, 1], ['14:56', 2, 1], ['14:56', 14, 2], ['14:56', 20, 1], ['14:56', 7, 1],
  ['14:56', 1, 1], ['14:56', 12, 1], ['14:56', 6, 1], ['14:56', 114, 3], ['14:57', 7, 1], ['15:00', 1329, 70],
];

const Amount = ({ text, color }: { text: string; color: string }) => {
  const unit = /[万亿]$/.test(text) ? text.slice(-1) : '';
  return <Value $color={color}>{unit ? text.slice(0, -1) : text}{unit && <i>{unit}</i>}</Value>;
};

const Book = ({ label, rows, priceColor }: { label: string; rows: string[][]; priceColor: string }) => (
  <BookTable>
    <tbody>
      {rows.map(([n, price, lots], i) => (
        <tr key={n}>
          {i === 0 && <BookSide rowSpan={5} scope="rowgroup">{label}</BookSide>}
          <td>{n}</td>
          <Price $color={priceColor}>{price}</Price>
          <td>{lots}</td>
        </tr>
      ))}
    </tbody>
  </BookTable>
);

/* ---------- bottom bars ---------- */

const IndexBar = styled.section`
  display: grid;
  grid-template-columns: 556fr 556fr 557fr 491fr;
  height: 31px;
  border-top: 2px solid ${LINE};
  border-bottom: 2px solid ${LINE};
`;
const IndexCell = styled.div<{ $wide?: boolean }>`
  display: grid;
  grid-template-columns: ${p => (p.$wide ? 92 : 28)}px repeat(4, 1fr);
  align-items: center;
  text-align: center;
  & + & { border-left: 2px solid ${LINE}; }
`;
const IndexName = styled.span<{ $small?: boolean }>`
  padding-left: 5px;
  text-align: left;
  font-size: ${p => (p.$small ? 21 : 22)}px;
  font-weight: 300;
`;
const indices = [
  ['沪', '3858.13', '-17.40', '-0.45%', '12228亿'],
  ['深', '12553.84', '-275.11', '-2.14%', '16522亿'],
  ['创', '2872.22', '-84.15', '-2.85%', '8038亿'],
  ['中小板指', '7637.11', '-147.98', '-1.90%', '1364亿'],
];

const Footer = styled.footer`
  display: flex;
  height: 27px;
  border-top: 1px solid ${LINE};
  border-bottom: 1px solid ${LINE};
`;
const FooterLink = styled.a`
  display: flex;
  align-items: center;
  padding: 0 6px 0 5px;
  border-right: 1px solid ${LINE};
  &:nth-child(n + 5) { padding-right: 4px; }
`;
const FooterHot = styled.b`
  align-self: center;
  padding-left: 1px;
  color: #ff0;
`;
const Search = styled.input`
  width: 423px;
  margin-left: auto;
  padding-left: 7px;
  background: #b4b4b4;
  &::placeholder { color: #000; opacity: 1; }
`;
const Desktop = styled.div`
  display: grid;
  grid-template-columns: 1454fr 212fr 494fr;
  height: 11px;
  background: #1c2d3a;
  i { grid-column: 2; background: #4a5860; }
`;
const Watermark = styled.div`
  position: fixed;
  right: 5px;
  bottom: 5px;
  width: 222px;
  height: 56px;
  padding: 1px 0 0 6px;
  background: #fff;
  color: #ff3c00;
  font: 700 30px/30px "Noto Sans CJK SC", sans-serif;
  p { margin: 0; color: #ff9a00; font: 23px/22px "DejaVu Sans", sans-serif; -webkit-text-stroke: 1px #ff9a00; }
`;

const sideItems: [string, ('light' | 'active')?][] = [
  ['首页', 'light'], ['应用', 'light'], ['分时图'], ['K线图', 'active'], ['个股资料'], ['自选报价'], ['综合排名'], ['牛叉诊股'], ['超级盘口'],
];

export default function App() {
  return (
    <Page>
      <GlobalStyle />
      <TitleBar>
        <Menu>
          {['系统', '报价', '分析', '扩展行情', 'LEVEL-2', '云决策', '委托', '智能', '工具', '资讯', '帮助'].map(m =>
            m === 'LEVEL-2' ? <SerifLink key={m} href="#">{m}</SerifLink> : <a key={m} href="#">{m}</a>)}
        </Menu>
        <Caption><Logo>同花顺</Logo><span>- A股技术分析</span></Caption>
        <TitleRight>
          <Notice href="#">弱转强信号出现!</Notice>
          <a href="#">注册</a>
          <a href="#">登录</a>
          <TitleIcons width="62" height="26" viewBox="0 0 62 26" fill="#808080" aria-hidden="true">
            <path d="M12 1c2 0 3 2 3 4 3 2 4 5 4 9 0 2 1 4 3 6v2H1v-2c2-2 3-4 3-6 0-4 2-7 5-9 0-2 1-4 3-4zM9 23h5l-2 3z" />
            <path d="M43 3c1 3 7 3 8 0l5 2 5 7-4 4-3-2v11H40V14l-3 2-4-4 5-7z" />
          </TitleIcons>
          <ModeButtons>
            <ModeButton>资讯</ModeButton>
            <ModeButton $dark>委托<svg width="8" height="6" aria-hidden="true"><path d="M0 0h8L4 6z" fill="#fff" /></svg></ModeButton>
          </ModeButtons>
          <WindowButtons>
            <WindowButton aria-label="最小化"><svg width="14" height="14"><path d="M0 11h13" stroke="#555" strokeWidth="3" /></svg></WindowButton>
            <WindowButton aria-label="还原"><svg width="18" height="16" fill="none" stroke="#555" strokeWidth="2"><path d="M5 4V1h12v8h-4M1 6h11v8H1z" /></svg></WindowButton>
            <WindowButton aria-label="关闭"><svg width="14" height="14"><path d="m1 1 11 12M12 1 1 13" stroke="#555" strokeWidth="3" /></svg></WindowButton>
          </WindowButtons>
        </TitleRight>
      </TitleBar>

      <ToolBar role="toolbar">
        {toolGroups.map((tools, g) => (
          <ToolGroup key={g} $count={tools.length}>
            {tools.map(t => (
              <ToolButton key={t.name} aria-label={t.name} $active={t.active} $color={t.color} $size={t.size}>{t.art || t.text}</ToolButton>
            ))}
          </ToolGroup>
        ))}
      </ToolBar>

      <Body>
        <SideNav>
          {sideItems.map(([label, tone]) => (
            <SideButton key={label} $tone={tone} $chars={label.length}>
              {label === '应用' && <svg width="12" height="14" aria-hidden="true"><path d="M0 2v9l7-4.500zM9 2h3v9H9z" /></svg>}
              <span>{label}</span>
            </SideButton>
          ))}
        </SideNav>

        <ChartColumn>
          <Legend>
            <LegendName $color={GREY}>日线(复权)</LegendName>
            <LegendName $color="#fff">大东南</LegendName>
            <LegendItem $color="#f0f0f0">MA5: 3.49<Arrow up /></LegendItem>
            <LegendItem $color="#f0f000">MA10: 3.51<Arrow /></LegendItem>
            <LegendItem $color="#e070e0">MA20: 3.64<Arrow /></LegendItem>
            <LegendItem $color="#00d800">MA30: 3.85<Arrow /></LegendItem>
            <LegendItem $color="#00d0d8">MA60: 3.30<Arrow up /></LegendItem>
            <ChartActions>
              {['加自选', '均线', '复权', '叠', '窗', '预测'].map(a => <ChartAction key={a}>{a}</ChartAction>)}
              <ChartAction aria-label="最新"><svg width="19" height="16" fill={GREY}><path d="M0 5h7V1l8 7-8 7v-4H0zM16 0h2v16h-2z" /></svg></ChartAction>
              <ChartAction aria-label="更多"><svg width="11" height="7" fill={GREY}><path d="M0 0h11L5 7z" /></svg></ChartAction>
            </ChartActions>
          </Legend>
          <PlotFrame><MainPlot /></PlotFrame>
          <Legend $framed>
            <LegendItem $color="#ff2020">测试</LegendItem>
            <LegendItem $color="#20e0e8">B: +3.73<Arrow /></LegendItem>
            <LegendItem $color="#000090">T250: +4.59</LegendItem>
            <LegendItem $color="#009494">T120: +4.59</LegendItem>
            <LegendItem $color="#00c000">T60: +4.59</LegendItem>
            <LegendItem $color="#c00000">T30: +4.59</LegendItem>
            <ChartActions><ExplainButton>指标说明</ExplainButton></ChartActions>
          </Legend>
          <SubPlot />
          <TabRow>
            <PlainTab>设置</PlainTab>
            <PlainTab>指标平台</PlainTab>
            <SlantTab>股林主升浪潜伏点</SlantTab>
            <SlantTab>天天躺赢副图</SlantTab>
            <SlantTab>波段加仓买卖</SlantTab>
            <SlantTab $active>测试</SlantTab>
          </TabRow>
        </ChartColumn>

        <Panel>
          <StockTitle>
            <Flag>R</Flag>
            <StockName>大东南<b>002263</b></StockName>
            <svg width="22" height="22" viewBox="0 0 22 22" aria-hidden="true">
              <circle cx="11" cy="11" r="5.500" fill="none" stroke="#606060" strokeWidth="4" />
              <circle cx="11" cy="11" r="9" fill="none" stroke="#606060" strokeWidth="4" strokeDasharray="3.500 3.570" />
            </svg>
          </StockTitle>
          <PanelFrame>
            <Ratio>
              <span>委比</span>
              <Value $color={RED}>+100.00%</Value>
              <Value $color={RED}>363834</Value>
            </Ratio>
            <Book label="卖盘" rows={asks} priceColor={GREY} />
            <Book label="买盘" rows={bids} priceColor={RED} />
            <Hint><span>在买盘3.95位置有</span><em>3985手</em><span>买单!</span><a href="#">查看详细</a></Hint>
            <Stats>
              {stats.map(([name, value, color]) => (
                <Stat key={name}><dt>{name}</dt><dd><Amount text={value} color={color} /></dd></Stat>
              ))}
            </Stats>
            <Sector>塑料制品<span>-1.01%</span><button>同行业比较</button></Sector>
            <TradeTable>
              <tbody>
                {trades.map(([time, lots, count], i) => {
                  const up = lots > 1000;
                  return (
                    <tr key={i}>
                      <td>{time}</td>
                      <td>4.03</td>
                      <Volume $up={up}>{lots}</Volume>
                      <td>
                        <svg width="17" height="17" viewBox="0 0 17 17" aria-hidden="true">
                          <path d={up ? 'M8 0 17 9h-5v8H4V9H0z' : 'M4 0h8v8h5l-9 9-8-9h4z'} fill={up ? RED : GREEN} />
                        </svg>
                      </td>
                      <td>{count}</td>
                    </tr>
                  );
                })}
              </tbody>
            </TradeTable>
          </PanelFrame>
          <TabRow $inset={4}>
            {['细', '诊', '分', '筹', '焰', '指', '财'].map((t, i) => <SlantTab key={t} $narrow $active={i === 0}>{t}</SlantTab>)}
          </TabRow>
        </Panel>
      </Body>

      <IndexBar>
        {indices.map(([name, ...values], k) => (
          <IndexCell key={name} $wide={k === 3}>
            <IndexName $small={k === 3}>{name}</IndexName>
            {values.map((v, i) => <Amount key={v} text={v} color={i === 3 ? CYAN : GREEN} />)}
          </IndexCell>
        ))}
      </IndexBar>
      <Footer>
        {['留言', '解盘', '股市日记', '股灵通', '行情', '7*24小时', '智能助手'].map(l => <FooterLink key={l} href="#">{l}</FooterLink>)}
        <FooterHot>股份</FooterHot>
        <Search aria-label="代码/名称/简拼/功能" placeholder="代码/名称/简拼/功能" />
      </Footer>
      <Desktop><i /></Desktop>
      <Watermark>股票公式指标网<p>www.gszx.com.cn</p></Watermark>
    </Page>
  );
}
